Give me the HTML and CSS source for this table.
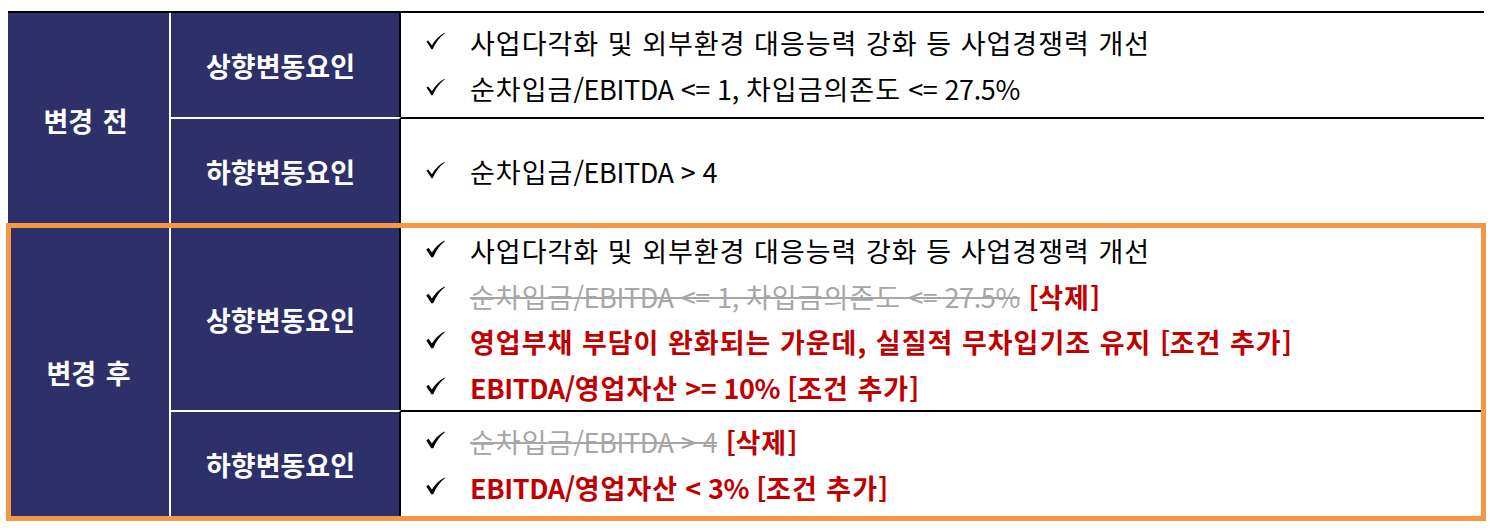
FILE: index.html
```html
<!DOCTYPE html>
<html lang="ko">
<head>
<meta charset="utf-8">
<title>등급변동요인 변경</title>
<link rel="stylesheet" href="styles.css">
</head>
<body>
<div class="wrap">
  <div class="group before">
    <div class="head span2">변경 전</div>
    <div class="label">상향변동요인</div>
    <div class="content">
      <div class="line"><svg class="chk" viewBox="0 0 20 18"><path d="M0.5 9.6 L2.2 8.6 L6.2 13.6 C9.5 8 13.5 3.5 19.5 0.3 L19.8 0.8 C14.5 4.8 10.4 10.4 7 17.6 L5.8 17.6 Z"/></svg><span>사업다각화 및 외부환경 대응능력 강화 등 사업경쟁력 개선</span></div>
      <div class="line"><svg class="chk" viewBox="0 0 20 18"><path d="M0.5 9.6 L2.2 8.6 L6.2 13.6 C9.5 8 13.5 3.5 19.5 0.3 L19.8 0.8 C14.5 4.8 10.4 10.4 7 17.6 L5.8 17.6 Z"/></svg><span>순차입금<span class="lat">/EBITDA &lt;= 1, </span>차입금의존도<span class="lat"> &lt;= 27.5%</span></span></div>
    </div>
    <div class="label row2">하향변동요인</div>
    <div class="content row2">
      <div class="line"><svg class="chk" viewBox="0 0 20 18"><path d="M0.5 9.6 L2.2 8.6 L6.2 13.6 C9.5 8 13.5 3.5 19.5 0.3 L19.8 0.8 C14.5 4.8 10.4 10.4 7 17.6 L5.8 17.6 Z"/></svg><span>순차입금<span class="lat">/EBITDA &gt; 4</span></span></div>
    </div>
  </div>
  <div class="group after">
    <div class="head span2">변경 후</div>
    <div class="label">상향변동요인</div>
    <div class="content">
      <div class="line"><svg class="chk bold" viewBox="0 0 20 18"><path d="M0.3 9.4 L2.6 7.8 L6.2 12.6 C9.5 7.5 13.5 3 19.5 0 L19.9 0.9 C14.8 4.8 10.8 10.4 7.6 17.8 L5.6 17.8 Z"/></svg><span>사업다각화 및 외부환경 대응능력 강화 등 사업경쟁력 개선</span></div>
      <div class="line"><svg class="chk bold" viewBox="0 0 20 18"><path d="M0.3 9.4 L2.6 7.8 L6.2 12.6 C9.5 7.5 13.5 3 19.5 0 L19.9 0.9 C14.8 4.8 10.8 10.4 7.6 17.8 L5.6 17.8 Z"/></svg><span><del>순차입금<span class="lat">/EBITDA &lt;= 1, </span>차입금의존도<span class="lat"> &lt;= 27.5%</span></del> <b class="red"><span class="lat">[</span>삭제<span class="lat">]</span></b></span></div>
      <div class="line"><svg class="chk bold" viewBox="0 0 20 18"><path d="M0.3 9.4 L2.6 7.8 L6.2 12.6 C9.5 7.5 13.5 3 19.5 0 L19.9 0.9 C14.8 4.8 10.8 10.4 7.6 17.8 L5.6 17.8 Z"/></svg><b class="red">영업부채 부담이 완화되는 가운데, 실질적 무차입기조 유지 <span class="lat">[</span>조건 추가<span class="lat">]</span></b></div>
      <div class="line"><svg class="chk bold" viewBox="0 0 20 18"><path d="M0.3 9.4 L2.6 7.8 L6.2 12.6 C9.5 7.5 13.5 3 19.5 0 L19.9 0.9 C14.8 4.8 10.8 10.4 7.6 17.8 L5.6 17.8 Z"/></svg><b class="red"><span class="lat">EBITDA/</span>영업자산<span class="lat"> &gt;= 10% [</span>조건 추가<span class="lat">]</span></b></div>
    </div>
    <div class="label row2">하향변동요인</div>
    <div class="content row2">
      <div class="line"><svg class="chk bold" viewBox="0 0 20 18"><path d="M0.3 9.4 L2.6 7.8 L6.2 12.6 C9.5 7.5 13.5 3 19.5 0 L19.9 0.9 C14.8 4.8 10.8 10.4 7.6 17.8 L5.6 17.8 Z"/></svg><span><del>순차입금<span class="lat">/EBITDA &gt; 4</span></del> <b class="red"><span class="lat">[</span>삭제<span class="lat">]</span></b></span></div>
      <div class="line"><svg class="chk bold" viewBox="0 0 20 18"><path d="M0.3 9.4 L2.6 7.8 L6.2 12.6 C9.5 7.5 13.5 3 19.5 0 L19.9 0.9 C14.8 4.8 10.8 10.4 7.6 17.8 L5.6 17.8 Z"/></svg><b class="red"><span class="lat">EBITDA/</span>영업자산<span class="lat"> &lt; 3% [</span>조건 추가<span class="lat">]</span></b></div>
    </div>
  </div>
</div>
</body>
</html>
```

FILE: styles.css
```css
html, body {
  margin: 0;
  padding: 0;
  background: #ffffff;
}

body {
  font-family: "Noto Sans CJK KR", "Noto Sans", sans-serif;
  color: #000000;
}

.wrap {
  padding: 11px 0 0 8px;
  width: 1476px;
}

.group {
  display: grid;
}

.before {
  grid-template-columns: 163px 230px 1fr;
  grid-template-rows: 104px 106px;
  border-top: 2px solid #000000;
}

.after {
  grid-template-columns: 160px 230px 1fr;
  grid-template-rows: 182px 106px;
  border: 5px solid #f79646;
  margin: 0 -2px 0 -2px;
}

.head {
  grid-row: 1 / span 2;
  background: #2e3169;
  color: #ffffff;
  font-weight: 700;
  font-size: 27px;
  border-right: 2px solid #ffffff;
  display: flex;
  align-items: center;
  justify-content: center;
  word-spacing: 2px;
  padding-right: 6px;
}

.before .head {
  padding-top: 4px;
}

.after .head {
  padding-right: 3px;
}

.label {
  background: #2e3169;
  color: #ffffff;
  font-weight: 700;
  font-size: 27px;
  border-right: 2px solid #000000;
  display: flex;
  align-items: center;
  justify-content: center;
  padding-right: 9px;
}

.label.row2 {
  border-top: 2px solid #ffffff;
}

.content {
  display: flex;
  flex-direction: column;
  justify-content: center;
  padding-left: 25px;
  font-size: 27px;
  letter-spacing: 1px;
}

.content.row2 {
  border-top: 2px solid #000000;
}

.line {
  display: flex;
  align-items: center;
  height: 46px;
  white-space: nowrap;
}

.after .content:not(.row2) .line {
  height: 45.5px;
}

.lat {
  letter-spacing: -0.4px;
}

.chk {
  width: 19px;
  height: 18px;
  margin-right: 25px;
  margin-top: -3px;
  fill: #000000;
  flex: none;
}

.red {
  color: #c00000;
  font-weight: 700;
}

del {
  color: #a6a6a6;
  text-decoration: line-through;
  text-decoration-color: #a6a6a6;
  text-decoration-thickness: 2px;
}
```
